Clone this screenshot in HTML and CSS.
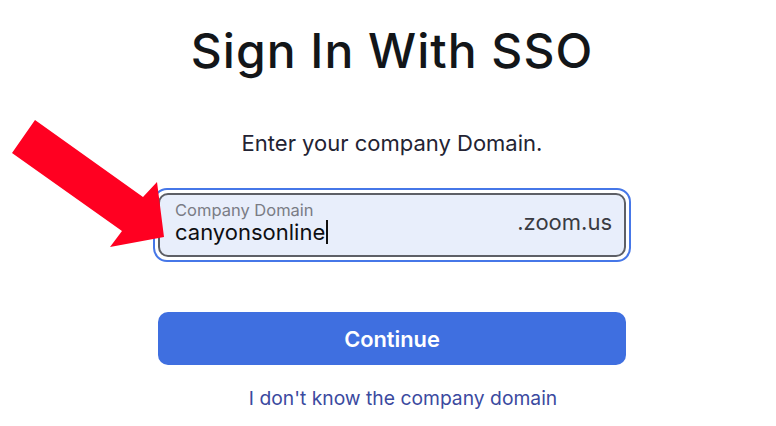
FILE: index.html
```html
<!DOCTYPE html>
<html>
<head>
<meta charset="utf-8">
<link rel="stylesheet" href="styles.css">
</head>
<body>
<main class="page">
  <h1 class="title">Sign In With SSO</h1>
  <p class="subtitle">Enter your company Domain.</p>
  <div class="field-ring">
    <div class="field">
      <div class="field-main">
        <span class="field-label">Company Domain</span>
        <span class="field-value">canyonsonline<span class="caret"></span></span>
      </div>
      <span class="field-suffix">.zoom.us</span>
    </div>
  </div>
  <button class="continue">Continue</button>
  <a class="help-link" href="#">I don't know the company domain</a>
</main>
<svg class="arrow" width="776" height="426" viewBox="0 0 776 426">
  <polygon points="35,120 143,197 157,182 164,237 110,247 122,231 12,153" fill="#ff0021"/>
</svg>
</body>
</html>
```
FILE: styles.css
```css
html, body {
  margin: 0;
  padding: 0;
  background: #ffffff;
}
body {
  width: 776px;
  height: 426px;
  overflow: hidden;
  position: relative;
  font-family: Inter, "Liberation Sans", sans-serif;
}
.page {
  display: flex;
  flex-direction: column;
  align-items: center;
  padding-left: 8px;
  padding-top: 22px;
}
.title {
  margin: 0;
  font-size: 48px;
  line-height: 58px;
  font-weight: 500;
  color: #131619;
  letter-spacing: 1px;
}
.subtitle {
  margin: 49px 0 0;
  font-size: 22px;
  line-height: 28px;
  color: #232333;
}
.field-ring {
  margin-top: 31px;
  width: 468px;
  padding: 3px;
  border: 2px solid #4677e8;
  border-radius: 14px;
}
.field {
  display: flex;
  align-items: center;
  justify-content: space-between;
  height: 64px;
  box-sizing: border-box;
  border: 2px solid #5d5f66;
  border-radius: 10px;
  background: #e8eefb;
  padding: 0 12px 6px 15px;
}
.field-main {
  display: flex;
  flex-direction: column;
}
.field-label {
  font-size: 16.5px;
  line-height: 20px;
  color: #7a7c85;
}
.field-value {
  font-size: 22px;
  line-height: 24px;
  color: #0e0e12;
  display: flex;
  align-items: center;
}
.caret {
  display: inline-block;
  width: 1.5px;
  height: 24px;
  background: #111;
  margin-left: 1px;
}
.field-suffix {
  font-size: 22px;
  color: #3a3b42;
}
.continue {
  margin-top: 50px;
  width: 468px;
  height: 53px;
  border: none;
  border-radius: 10px;
  background: #3f6fe0;
  color: #ffffff;
  font-family: Inter, "Liberation Sans", sans-serif;
  font-size: 21.8px;
  font-weight: 600;
}
.help-link {
  margin-top: 21px;
  margin-left: 22px;
  font-size: 19.3px;
  line-height: 24px;
  color: #3b4aa0;
  text-decoration: none;
}
.arrow {
  position: absolute;
  left: 0;
  top: 0;
  pointer-events: none;
}
```
